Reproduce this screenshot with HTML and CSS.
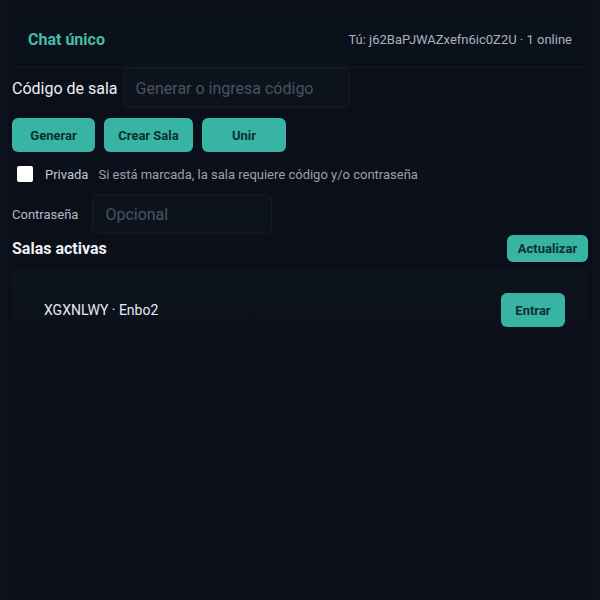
FILE: index.html
```html
<!DOCTYPE html>
<html lang="es">
<head>
<meta charset="utf-8">
<title>Chat único</title>
<link rel="stylesheet" href="styles.css">
</head>
<body>
<div class="app">
  <header class="header">
    <h1 class="title">Chat único</h1>
    <div class="me">Tú: j62BaPJWAZxefn6ic0Z2U · 1 online</div>
  </header>

  <div class="row code-row">
    <label class="label-lg">Código de sala</label>
    <input class="input code-input" type="text" placeholder="Generar o ingresa código">
  </div>

  <div class="row btn-row">
    <button class="btn btn-gen">Generar</button>
    <button class="btn btn-create">Crear Sala</button>
    <button class="btn btn-join">Unir</button>
  </div>

  <div class="row check-row">
    <span class="checkbox"></span>
    <span class="check-label">Privada</span>
    <span class="hint">Si está marcada, la sala requiere código y/o contraseña</span>
  </div>

  <div class="row pass-row">
    <label class="label-sm">Contraseña</label>
    <input class="input pass-input" type="text" placeholder="Opcional">
  </div>

  <div class="rooms-head">
    <h2 class="rooms-title">Salas activas</h2>
    <button class="btn btn-small">Actualizar</button>
  </div>

  <div class="room-card">
    <div class="room">
      <span class="room-name">XGXNLWY · Enbo2</span>
      <button class="btn btn-enter">Entrar</button>
    </div>
  </div>
</div>
</body>
</html>
```

FILE: styles.css
```css
* { box-sizing: border-box; }

html, body {
  margin: 0;
  padding: 0;
  background: #0e131d;
  font-family: Roboto, "Noto Sans", "Liberation Sans", sans-serif;
  color: #e8eaee;
}

.app {
  margin: 0 8px;
  padding: 12px 4px 0;
  min-height: 600px;
  background: #0a0f19;
}

.header {
  display: flex;
  justify-content: space-between;
  align-items: center;
  padding: 16px 16px;
  height: 56px;
  background: #0b111b;
  border-bottom: 1px solid #141b26;
}

.title {
  margin: 0;
  font-size: 16px;
  font-weight: 700;
  color: #45bda6;
}

.me {
  font-size: 13px;
  color: #aab1bb;
}

.row {
  display: flex;
  align-items: center;
}

.code-row {
  height: 40px;
  gap: 5px;
}

.label-lg {
  font-size: 16px;
  color: #eef0f3;
}

.input {
  height: 40px;
  border: 1px solid #151c27;
  border-radius: 6px;
  background: #0d131d;
  padding: 0 12px;
  font-family: inherit;
  font-size: 16px;
  color: #e8eaee;
  outline: none;
}

.input::placeholder { color: #4a5260; }

.code-input { width: 227px; }

.btn-row {
  margin-top: 10px;
  gap: 9px;
}

.btn {
  border: none;
  border-radius: 6px;
  background: #38b4a4;
  color: #0d302f;
  font-family: inherit;
  font-weight: 700;
  font-size: 13px;
  cursor: pointer;
}

.btn-row .btn { height: 34px; }
.btn-gen { width: 83px; }
.btn-create { width: 89px; }
.btn-join { width: 84px; }

.check-row {
  margin-top: 12px;
  height: 20px;
}

.checkbox {
  width: 16px;
  height: 16px;
  margin-left: 5px;
  border-radius: 2px;
  background: #ffffff;
}

.check-label {
  margin-left: 12px;
  font-size: 13px;
  color: #c3c8cf;
}

.hint {
  margin-left: 10px;
  font-size: 13px;
  color: #9aa1ab;
}

.pass-row {
  margin-top: 10px;
  gap: 14px;
}

.label-sm {
  font-size: 13px;
  color: #b4bac3;
}

.pass-input { width: 180px; }

.rooms-head {
  display: flex;
  justify-content: space-between;
  align-items: center;
  height: 28px;
  margin-top: 0;
}

.rooms-title {
  margin: 0;
  font-size: 16px;
  font-weight: 700;
  color: #eef0f3;
}

.btn-small {
  width: 81px;
  height: 27px;
  font-size: 13px;
}

.room-card {
  margin-top: 8px;
  border: 1px solid #0f1520;
  border-radius: 6px;
  background: linear-gradient(180deg, #0e141e 0%, #0a0f18 100%);
  padding: 22px 22px 29px 31px;
}

.room {
  display: flex;
  justify-content: space-between;
  align-items: center;
}

.room-name {
  font-size: 14px;
  color: #e8eaee;
}

.btn-enter {
  width: 64px;
  height: 34px;
  font-size: 13px;
}
```
